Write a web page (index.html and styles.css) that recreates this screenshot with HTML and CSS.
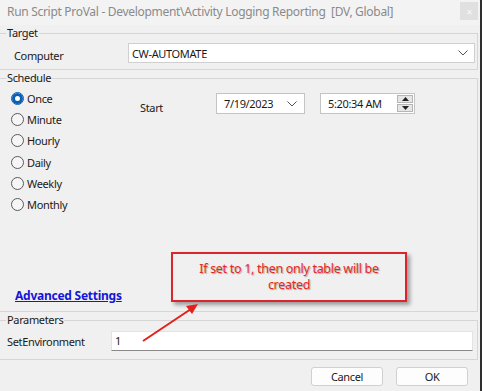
FILE: index.html
```html
<!DOCTYPE html>
<html lang="en">
<head>
    <meta charset="UTF-8">
    <meta name="viewport" content="width=device-width, initial-scale=1.0">
    <title>Run Script ProVal</title>
    <link rel="stylesheet" href="styles.css">
</head>
<body>
    <div class="window">
        <div class="titlebar">
            <span class="title">Run Script ProVal - Development\Activity Logging Reporting&nbsp; [DV, Global]</span>
            <span class="close">&#x2715;</span>
        </div>

        <fieldset class="group target">
            <legend>Target</legend>
            <div class="row">
                <span class="row-label">Computer</span>
                <div class="combo">
                    <span>CW-AUTOMATE</span>
                    <svg class="chevron" width="10" height="6" viewBox="0 0 10 6"><path d="M0.5 0.5 L5 5 L9.5 0.5" fill="none" stroke="#555" stroke-width="1"/></svg>
                </div>
            </div>
        </fieldset>

        <fieldset class="group schedule">
            <legend>Schedule</legend>
            <div class="sched-body">
                <div class="radios">
                    <div class="radio checked"><span class="dot"></span>Once</div>
                    <div class="radio"><span class="dot"></span>Minute</div>
                    <div class="radio"><span class="dot"></span>Hourly</div>
                    <div class="radio"><span class="dot"></span>Daily</div>
                    <div class="radio"><span class="dot"></span>Weekly</div>
                    <div class="radio"><span class="dot"></span>Monthly</div>
                </div>
                <div class="start">
                    <span class="start-label">Start</span>
                    <div class="date">
                        <span>7/19/2023</span>
                        <svg class="chevron" width="10" height="6" viewBox="0 0 10 6"><path d="M0.5 0.5 L5 5 L9.5 0.5" fill="none" stroke="#555" stroke-width="1"/></svg>
                    </div>
                    <div class="time">
                        <span>5:20:34 AM</span>
                        <div class="spin">
                            <span class="spin-btn"><svg width="7" height="4" viewBox="0 0 7 4"><path d="M0 4 L3.5 0 L7 4 Z" fill="#222"/></svg></span>
                            <span class="spin-btn"><svg width="7" height="4" viewBox="0 0 7 4"><path d="M0 0 L3.5 4 L7 0 Z" fill="#222"/></svg></span>
                        </div>
                    </div>
                </div>
            </div>
            <a href="#" class="advanced">Advanced Settings</a>
        </fieldset>

        <fieldset class="group params">
            <legend>Parameters</legend>
            <div class="row">
                <span class="param-label">SetEnvironment</span>
                <div class="textbox">1</div>
            </div>
        </fieldset>

        <div class="buttons">
            <button class="btn">Cancel</button>
            <button class="btn ok">OK</button>
        </div>

        <!-- annotation overlay -->
        <div class="callout">If set to 1, then only table will be<br>created</div>
        <svg class="arrow" width="482" height="391" viewBox="0 0 482 391">
            <line x1="143" y1="341" x2="191" y2="309" stroke="#e3201c" stroke-width="2"/>
            <path d="M198 304 L186 306 L192 314 Z" fill="#e3201c"/>
        </svg>
    </div>
</body>
</html>
```

FILE: styles.css
```css
body {
    margin: 0;
    background-color: #f0f0f0;
    font-family: "Noto Sans", "Open Sans", sans-serif;
    font-size: 11px;
    letter-spacing: -0.35px;
    color: #1a1a1a;
}
.window {
    position: relative;
    width: 480px;
    height: 391px;
    border-right: 2px solid #2e2e2e;
    background-color: #f0f0f0;
    overflow: hidden;
}
.titlebar {
    height: 25px;
    display: flex;
    align-items: center;
    justify-content: space-between;
    padding-left: 7px;
    background-color: #f3f3f3;
}
.title {
    color: #8a8a8a;
    font-size: 12px;
    letter-spacing: -0.3px;
    margin-top: -2px;
}
.close {
    width: 18px;
    height: 18px;
    margin-right: 2px;
    margin-top: -3px;
    background-color: #e0e0e0;
    color: #f8f8f8;
    font-size: 8px;
    display: flex;
    align-items: center;
    justify-content: center;
}
.group {
    margin: 0 2px 0 0;
    padding: 0;
    border: 1px solid #d6d6d6;
    border-left: 0;
    min-width: 0;
}
.group legend {
    margin-left: 6px;
    padding: 0 1px;
    height: 16px;
    line-height: 16px;
    color: #1a1a1a;
}
.row {
    display: flex;
    align-items: center;
}
.target .row {
    padding: 2px 2px 6px 0;
}
.row-label {
    width: 128px;
    padding-left: 14px;
    box-sizing: border-box;
    margin-top: 4px;
}
.combo {
    flex: 1;
    height: 20px;
    box-sizing: border-box;
    background-color: #fff;
    border: 1px solid #cfcfcf;
    display: flex;
    align-items: center;
    justify-content: space-between;
    padding: 0 6px 0 3px;
}
.chevron {
    display: block;
}
.sched-body {
    height: 200px;
    display: flex;
    padding-top: 2px;
}
.radios {
    width: 140px;
    padding-left: 11px;
    box-sizing: border-box;
}
.radio {
    height: 21.2px;
    display: flex;
    align-items: center;
}
.dot {
    width: 11px;
    height: 11px;
    border: 1px solid #5a5a5a;
    border-radius: 50%;
    background-color: #f6f6f6;
    margin-right: 3px;
    box-sizing: content-box;
}
.radio.checked .dot {
    border-color: #0a5fb4;
    background-color: #fff;
    box-shadow: inset 0 0 0 3px #0a5fb4;
}
.start {
    display: flex;
    align-items: flex-start;
    padding-top: 5px;
}
.start-label {
    width: 76px;
    padding-top: 7px;
}
.date,
.time {
    height: 21px;
    box-sizing: border-box;
    background-color: #fff;
    border: 1px solid #c4c4c4;
    display: flex;
    align-items: center;
    justify-content: space-between;
}
.date {
    width: 89px;
    padding: 0 7px 0 7px;
}
.time {
    width: 95px;
    margin-left: 15px;
    padding: 0 1px 0 7px;
}
.spin {
    display: flex;
    flex-direction: column;
    gap: 1px;
}
.spin-btn {
    width: 16px;
    height: 8px;
    background-color: #e6e6e6;
    border: 1px solid #b5b5b5;
    box-sizing: border-box;
    display: flex;
    align-items: center;
    justify-content: center;
}
.spin-btn svg {
    display: block;
}
.advanced {
    display: block;
    margin: 0 0 7px 15px;
    color: #1515d8;
    font-weight: bold;
    font-size: 12px;
    letter-spacing: -0.25px;
    line-height: 16px;
}
.params .row {
    padding: 3px 4px 8px 0;
}
.param-label {
    width: 111px;
    padding-left: 7px;
    box-sizing: border-box;
}
.textbox {
    flex: 1;
    height: 20px;
    box-sizing: border-box;
    background-color: #fff;
    border: 1px solid #e3e3e3;
    border-bottom-color: #8a8a8a;
    padding: 1px 3px;
}
.buttons {
    display: flex;
    justify-content: flex-end;
    gap: 13px;
    padding: 7px 12px 0 0;
}
.btn {
    width: 72px;
    height: 19px;
    font-family: inherit;
    font-size: 11px;
    letter-spacing: -0.35px;
    line-height: 15px;
    color: #1a1a1a;
    background-color: #fdfdfd;
    border: 1px solid #d0d0d0;
    border-radius: 3px;
    padding: 0;
}
.callout {
    position: absolute;
    left: 171px;
    top: 252px;
    width: 236px;
    height: 50px;
    box-sizing: border-box;
    border: 2px solid #d9252b;
    box-shadow: 3px 3px 4px rgba(0,0,0,0.35);
    color: #e62a22;
    text-align: center;
    font-size: 12.5px;
    line-height: 16px;
    padding-top: 7px;
    letter-spacing: -0.3px;
    text-shadow: 1px 1px 1px rgba(0,0,0,0.3);
}
.arrow {
    position: absolute;
    left: 0;
    top: 0;
    pointer-events: none;
}
```
